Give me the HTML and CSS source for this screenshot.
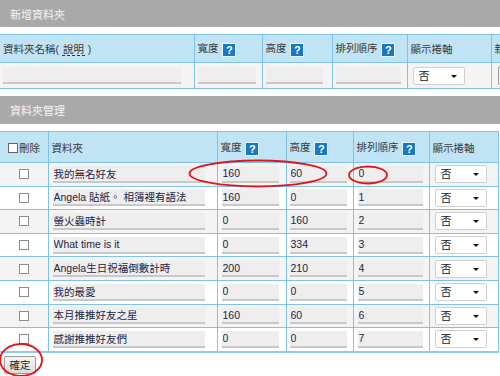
FILE: index.html
```html
<!DOCTYPE html>
<html lang="zh-Hant">
<head>
<meta charset="utf-8">
<title>資料夾管理</title>
<link rel="stylesheet" href="styles.css">
</head>
<body>
<div class="page">
  <div class="bar bar-add">新增資料夾</div>
  <table class="grid add-grid">
    <colgroup>
      <col class="c-aname"><col class="c-aw"><col class="c-ah"><col class="c-ao"><col class="c-as"><col class="c-ab">
    </colgroup>
    <tr class="head">
      <th class="first">資料夾名稱( <span class="dotted">說明</span> )</th>
      <th>寬度 <span class="help">?</span></th>
      <th>高度 <span class="help">?</span></th>
      <th>排列順序 <span class="help">?</span></th>
      <th>顯示捲軸</th>
      <th>新增</th>
    </tr>
    <tr class="odd">
      <td class="first"><input class="field f-aname" type="text" value=""></td>
      <td><input class="field f-aw" type="text" value=""></td>
      <td><input class="field f-ah" type="text" value=""></td>
      <td><input class="field f-ao" type="text" value=""></td>
      <td><span class="select">否<span class="arrow"></span></span></td>
      <td><span class="mini-btn">新增</span></td>
    </tr>
  </table>

  <div class="bar bar-manage">資料夾管理</div>
  <table class="grid manage-grid">
    <colgroup>
      <col class="c-del"><col class="c-name"><col class="c-w"><col class="c-h"><col class="c-o"><col class="c-s">
    </colgroup>
    <tr class="head">
      <th class="first"><span class="cb cb-head"></span>刪除</th>
      <th>資料夾</th>
      <th>寬度 <span class="help">?</span></th>
      <th>高度 <span class="help">?</span></th>
      <th>排列順序 <span class="help">?</span></th>
      <th>顯示捲軸</th>
    </tr>
    <tr class="odd">
      <td class="first center"><span class="cb"></span></td>
      <td><input class="field f-name" type="text" value="我的無名好友"></td>
      <td><input class="field f-w" type="text" value="160"></td>
      <td><input class="field f-h" type="text" value="60"></td>
      <td><input class="field f-o" type="text" value="0"></td>
      <td><span class="select">否<span class="arrow"></span></span></td>
    </tr>
    <tr>
      <td class="first center"><span class="cb"></span></td>
      <td><input class="field f-name" type="text" value="Angela 貼紙。 相簿裡有語法"></td>
      <td><input class="field f-w" type="text" value="160"></td>
      <td><input class="field f-h" type="text" value="0"></td>
      <td><input class="field f-o" type="text" value="1"></td>
      <td><span class="select">否<span class="arrow"></span></span></td>
    </tr>
    <tr class="odd">
      <td class="first center"><span class="cb"></span></td>
      <td><input class="field f-name" type="text" value="螢火蟲時計"></td>
      <td><input class="field f-w" type="text" value="0"></td>
      <td><input class="field f-h" type="text" value="160"></td>
      <td><input class="field f-o" type="text" value="2"></td>
      <td><span class="select">否<span class="arrow"></span></span></td>
    </tr>
    <tr>
      <td class="first center"><span class="cb"></span></td>
      <td><input class="field f-name" type="text" value="What time is it"></td>
      <td><input class="field f-w" type="text" value="0"></td>
      <td><input class="field f-h" type="text" value="334"></td>
      <td><input class="field f-o" type="text" value="3"></td>
      <td><span class="select">否<span class="arrow"></span></span></td>
    </tr>
    <tr class="odd">
      <td class="first center"><span class="cb"></span></td>
      <td><input class="field f-name" type="text" value="Angela生日祝福倒數計時"></td>
      <td><input class="field f-w" type="text" value="200"></td>
      <td><input class="field f-h" type="text" value="210"></td>
      <td><input class="field f-o" type="text" value="4"></td>
      <td><span class="select">否<span class="arrow"></span></span></td>
    </tr>
    <tr>
      <td class="first center"><span class="cb"></span></td>
      <td><input class="field f-name" type="text" value="我的最愛"></td>
      <td><input class="field f-w" type="text" value="0"></td>
      <td><input class="field f-h" type="text" value="0"></td>
      <td><input class="field f-o" type="text" value="5"></td>
      <td><span class="select">否<span class="arrow"></span></span></td>
    </tr>
    <tr class="odd">
      <td class="first center"><span class="cb"></span></td>
      <td><input class="field f-name" type="text" value="本月推推好友之星"></td>
      <td><input class="field f-w" type="text" value="160"></td>
      <td><input class="field f-h" type="text" value="60"></td>
      <td><input class="field f-o" type="text" value="6"></td>
      <td><span class="select">否<span class="arrow"></span></span></td>
    </tr>
    <tr class="last">
      <td class="first center"><span class="cb"></span></td>
      <td><input class="field f-name" type="text" value="感謝推推好友們"></td>
      <td><input class="field f-w" type="text" value="0"></td>
      <td><input class="field f-h" type="text" value="0"></td>
      <td><input class="field f-o" type="text" value="7"></td>
      <td><span class="select">否<span class="arrow"></span></span></td>
    </tr>
  </table>

  <button class="confirm" type="button">確定</button>

  <svg class="marks" width="500" height="376" viewBox="0 0 500 376" aria-hidden="true">
    <ellipse cx="258" cy="173.5" rx="68.5" ry="13" />
    <ellipse cx="368" cy="175" rx="19" ry="8.5" />
    <ellipse cx="21" cy="360" rx="21" ry="16" />
  </svg>
</div>
</body>
</html>
```

FILE: styles.css
```css
html, body {
  margin: 0;
  padding: 0;
  background: #ffffff;
}

body {
  font-family: "Liberation Sans", "Noto Sans CJK TC", sans-serif;
  font-size: 10.5px;
  color: #333333;
}

.page {
  position: relative;
  width: 500px;
  height: 376px;
  overflow: hidden;
}

.bar {
  display: flex;
  align-items: center;
  padding-left: 10px;
  background: #a9a9a9;
  color: #f5f5f5;
  font-size: 11px;
}

.bar-add {
  height: 27px;
  margin-bottom: 7px;
}

.bar-manage {
  height: 28px;
  margin-bottom: 7px;
}

.grid {
  border-collapse: collapse;
  table-layout: fixed;
}

.grid th,
.grid td {
  border: 1px solid #7fc3ea;
  padding: 0 0 0 3px;
  text-align: left;
  font-weight: normal;
  white-space: nowrap;
  overflow: hidden;
}

.grid .first {
  border-left: none;
}

.grid .center {
  text-align: center;
  padding-left: 0;
}

.grid .head th {
  background: #c1e4f5;
  color: #3a3a3a;
}

.grid .odd td {
  background: #f4f4f4;
}

.add-grid {
  width: 560px;
  margin-bottom: 7px;
}

.add-grid .head th { height: 27px; }
.add-grid .odd td { height: 25px; }

.c-aname { width: 194px; }
.c-aw { width: 68px; }
.c-ah { width: 70px; }
.c-ao { width: 75px; }
.c-as { width: 84px; }
.c-ab { width: 69px; }

.manage-grid {
  width: 498px;
  border-right: 1px solid #7fc3ea;
}

.manage-grid .head th { height: 30px; }
.manage-grid td { height: 22.6px; }
.manage-grid .last td { border-bottom: 2px solid #8ccbee; }

.c-del { width: 48px; }
.c-name { width: 169px; }
.c-w { width: 69px; }
.c-h { width: 67px; }
.c-o { width: 76px; }
.c-s { width: 69px; }

.dotted {
  border-bottom: 1px dashed #333;
  padding: 0 1px;
}

.help {
  display: inline-block;
  width: 12px;
  height: 12px;
  line-height: 12px;
  margin-left: 1px;
  vertical-align: -2px;
  background: #1878c4;
  border: 1px solid #e6f3fb;
  color: #ffffff;
  font-family: "Liberation Sans", sans-serif;
  font-weight: bold;
  font-size: 11px;
  text-align: center;
}

.field {
  display: block;
  box-sizing: border-box;
  height: 17px;
  margin: 0;
  padding: 0 2px 0 1px;
  border: none;
  border-bottom: 2px solid #c9c9c9;
  background: #eeeeee;
  font-family: "Liberation Sans", "Noto Sans CJK TC", sans-serif;
  font-size: 10.5px;
  color: #1d2546;
  outline: none;
}

.f-aname { width: 178px; }
.f-aw { width: 58px; }
.f-ah { width: 57px; }
.f-ao { width: 65px; }

.f-name { width: 152px; margin-left: 1px; }
.f-w { width: 57px; margin-left: 1px; }
.f-h { width: 57px; }
.f-o { width: 65px; margin-left: 1px; }

.select {
  position: relative;
  display: block;
  box-sizing: border-box;
  width: 52px;
  height: 18px;
  line-height: 16px;
  padding-left: 5px;
  margin-left: 2px;
  border: 1px solid #cfcfcf;
  border-radius: 2px;
  background: #ffffff;
  color: #222222;
  font-size: 11px;
}

.arrow {
  position: absolute;
  right: 7px;
  top: 7px;
  width: 0;
  height: 0;
  border-left: 3px solid transparent;
  border-right: 3px solid transparent;
  border-top: 3px solid #111111;
}

.mini-btn {
  display: inline-block;
  margin-left: 3px;
  padding: 1px 4px;
  border: 1px solid #a0a0a0;
  border-radius: 2px;
  background: #eeeeee;
  color: #222;
}

.cb {
  display: inline-block;
  box-sizing: border-box;
  width: 10px;
  height: 10px;
  border: 1px solid #8c8c8c;
  background: #ffffff;
  vertical-align: -1px;
}

.cb-head {
  margin: 0 1px 0 5px;
  border-color: #666;
}

.confirm {
  display: block;
  box-sizing: border-box;
  margin: 3px 0 0 4px;
  width: 32px;
  height: 18px;
  padding: 0;
  border: 1px solid #9a9a9a;
  border-radius: 2px;
  background: linear-gradient(#f6f6f6, #dcdcdc);
  font-family: "Liberation Sans", "Noto Sans CJK TC", sans-serif;
  font-size: 10.5px;
  color: #222;
}

.marks {
  position: absolute;
  left: 0;
  top: 0;
  pointer-events: none;
}

.marks ellipse {
  fill: none;
  stroke: #e3121b;
  stroke-width: 1.8;
}
```
